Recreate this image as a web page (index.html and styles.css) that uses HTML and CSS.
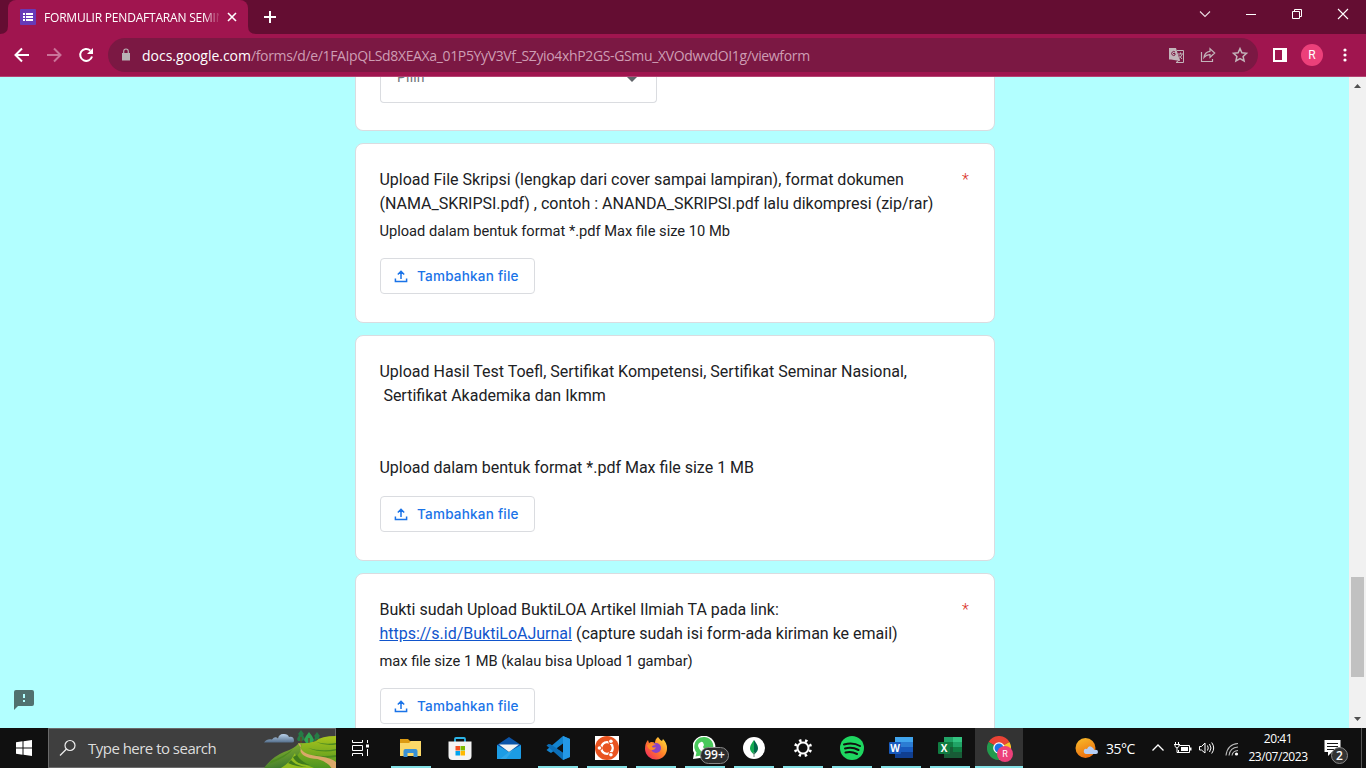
FILE: index.html
```html
<!DOCTYPE html>
<html lang="id">
<head>
<meta charset="utf-8">
<title>FORMULIR PENDAFTARAN SEMINAR</title>
<link rel="stylesheet" href="styles.css">
</head>
<body>
<svg width="0" height="0" class="defs">
  <symbol id="upload" viewBox="0 0 18 18"><path d="M3.400 11.500v3.100h11.200v-3.100M9 12V4.600M5.800 7.500 9 4.300l3.200 3.200" fill="none" stroke="#1a73e8" stroke-width="1.500"/></symbol>
</svg>
<div class="screen">
  <header class="tabstrip">
    <svg class="tab-curve" width="8" height="34"><path d="M0 34Q8 34 8 26V34Z" fill="#a0154f"/></svg>
    <div class="tab">
      <svg width="16" height="16"><rect width="16" height="16" rx="1" fill="#673ab7"/><path d="M3 4h2v2H3zM3 7h2v2H3zM3 10h2v2H3zM6 4h7v2H6zM6 7h7v2H6zM6 10h7v2H6z" fill="#fff"/></svg>
      <span class="tab-title">FORMULIR PENDAFTARAN SEMIN</span>
      <svg class="tab-close" width="10" height="10"><path d="M1 1l8 8M9 1L1 9" stroke="#fff" stroke-width="1.600"/></svg>
    </div>
    <svg class="tab-curve" width="8" height="34"><path d="M8 34Q0 34 0 26V34Z" fill="#a0154f"/></svg>
    <svg class="newtab" width="14" height="14"><path d="M7 1v12M1 7h12" stroke="#fff" stroke-width="2"/></svg>
    <div class="window-controls">
      <svg width="46" height="28"><path d="M18 11.500l5 5 5-5" fill="none" stroke="#eadce2" stroke-width="1.100"/></svg>
      <svg width="46" height="28"><path d="M18 14.500h10" stroke="#fff"/></svg>
      <svg width="46" height="28"><path d="M18.500 11.500h7v7h-7zM20.500 11v-1.500h7v7H26" fill="none" stroke="#fff"/></svg>
      <svg width="46" height="28"><path d="M18 9l10 10M28 9L18 19" stroke="#fff" stroke-width="1.100"/></svg>
    </div>
  </header>
  <nav class="toolbar">
    <svg width="32" height="32"><path d="M23 16H10M16 9.500L9.500 16l6.500 6.500" fill="none" stroke="#fff" stroke-width="2"/></svg>
    <svg width="32" height="32"><path d="M9 16h13M16 9.500l6.500 6.500-6.500 6.500" fill="none" stroke="#ca7399" stroke-width="2"/></svg>
    <svg width="32" height="32"><path d="M20.300 11.500A6 6 0 1 0 22 17.500" fill="none" stroke="#fff" stroke-width="2"/><path d="M23 9v6h-6z" fill="#fff"/></svg>
    <div class="omnibox">
      <svg width="10" height="14"><path d="M1 5h8v7.500H1z" fill="#b9b2b5"/><path d="M2.700 5V3.300a2.300 2.300 0 0 1 4.600 0V5" fill="none" stroke="#b9b2b5" stroke-width="1.200"/></svg>
      <span class="url"><b>docs.google.com</b><span>/forms/d/e/1FAIpQLSd8XEAXa_01P5YyV3Vf_SZyio4xhP2GS-GSmu_XVOdwvdOI1g/viewform</span></span>
      <svg class="omni-first" width="32" height="32"><path d="M9 9h7l4 13-9-1.500H9z" fill="#c3b4ba"/><path d="M17 11.500h6.500v12H16l4-3" fill="none" stroke="#c3b4ba"/><path d="M15 13a2 2 0 1 0 0 3v-1.500h-2" fill="none" stroke="#7b1843"/><path d="M18 15h5M20.500 13.500V15M22 15.500q-1 3-4 4.500M19 16.500l3 3.500" fill="none" stroke="#c3b4ba"/></svg>
      <svg width="32" height="32"><path d="M9.500 13v9.500h11V20M18 9.700l4.700 4.300-4.700 4.300v-2.700q-3.600-.2-6 2.900.6-5.600 6-6.200z" fill="none" stroke="#c3b4ba" stroke-width="1.200"/></svg>
      <svg width="32" height="32"><path d="M16 9.600l1.900 4.200 4.600.5-3.400 3.100 1 4.600-4.100-2.400-4.100 2.400 1-4.600-3.400-3.100 4.600-.5z" fill="none" stroke="#c3b4ba" stroke-width="1.500"/></svg>
    </div>
    <svg class="panel-icon" width="14" height="14"><path d="M1 1h12v12H1z" fill="none" stroke="#fff" stroke-width="2"/><path d="M9 1h4v12H9z" fill="#fff"/></svg>
    <div class="avatar">R</div>
    <svg class="dots" width="4" height="16"><circle cx="2" cy="3" r="1.600" fill="#fff"/><circle cx="2" cy="8" r="1.600" fill="#fff"/><circle cx="2" cy="13" r="1.600" fill="#fff"/></svg>
  </nav>

  <main class="viewport">
    <div class="form">
      <section class="card card-select">
        <div class="select"><span>Pilih</span><svg width="10" height="5"><path d="M0 0h10L5 5z" fill="#5f6368"/></svg></div>
      </section>
      <section class="card">
        <div class="question"><div class="title">Upload File Skripsi (lengkap dari cover sampai lampiran), format dokumen<br>(NAMA_SKRIPSI.pdf) , contoh : ANANDA_SKRIPSI.pdf lalu dikompresi (zip/rar)</div><span class="required">*</span></div>
        <div class="hint">Upload dalam bentuk format *.pdf Max file size 10 Mb</div>
        <button class="upload"><svg width="18" height="18"><use href="#upload"/></svg><span>Tambahkan file</span></button>
      </section>
      <section class="card">
        <div class="title">Upload Hasil Test Toefl, Sertifikat Kompetensi, Sertifikat Seminar Nasional,<br>&nbsp;Sertifikat Akademika dan Ikmm<br><br><br>Upload dalam bentuk format *.pdf Max file size 1 MB</div>
        <button class="upload"><svg width="18" height="18"><use href="#upload"/></svg><span>Tambahkan file</span></button>
      </section>
      <section class="card">
        <div class="question"><div class="title">Bukti sudah Upload BuktiLOA Artikel Ilmiah TA pada link:<br><a href="#">https://s.id/BuktiLoAJurnal</a> (capture sudah isi form-ada kiriman ke email)</div><span class="required">*</span></div>
        <div class="hint">max file size 1 MB (kalau bisa Upload 1 gambar)</div>
        <button class="upload"><svg width="18" height="18"><use href="#upload"/></svg><span>Tambahkan file</span></button>
      </section>
    </div>
    <svg class="report" width="20" height="20"><path d="M2 0h16a2 2 0 0 1 2 2v12a2 2 0 0 1-2 2H4l-4 4V2a2 2 0 0 1 2-2z" fill="#50716f"/><path d="M9 4h2v4H9zM9 10h2v2H9z" fill="#b2ffff"/></svg>
    <div class="scrollbar">
      <svg width="17" height="17"><path d="M5 11h7L8.500 7z" fill="#505050"/></svg>
      <div class="thumb"></div>
      <svg width="17" height="17"><path d="M5 6h7l-3.500 4z" fill="#505050"/></svg>
    </div>
  </main>

  <footer class="taskbar">
    <svg width="48" height="40"><path d="M16 14.300l6.500-1v6.200H16zM23.500 13.200L32 12v7.500h-8.500zM16 20.500h6.500v6.200l-6.500-1zM23.500 20.500H32V28l-8.500-1.200z" fill="#fff"/></svg>
    <div class="search">
      <svg width="18" height="18"><circle cx="11" cy="6.500" r="5" fill="none" stroke="#eee" stroke-width="1.200"/><path d="M7.500 10L1 16.500" stroke="#eee" stroke-width="1.200"/></svg>
      <span>Type here to search</span>
      <svg class="scene" width="72" height="40">
        <defs>
          <linearGradient id="cloud" x2="0" y2="1"><stop stop-color="#b9d0e8"/><stop offset="1" stop-color="#56718e"/></linearGradient>
          <linearGradient id="hill" x2="0" y2="1"><stop stop-color="#a9c51d"/><stop offset="1" stop-color="#4d9420"/></linearGradient>
          <linearGradient id="slope" x2=".5" y2="1"><stop stop-color="#9bc22d"/><stop offset="1" stop-color="#38752e"/></linearGradient>
        </defs>
        <path d="M0 14.500q3-4 8-3 3-4 6-1 1-5 6-4.500 4 0 5 3 5-1 5 4 0 1.500-2 1.500z" fill="url(#cloud)"/>
        <path d="M37 2l3 4-1 1 2 4-3 2h-4l-1-2 2-4-1-1z" fill="#267b45"/><path d="M45 4l3 4 2 4-2 3h-6l-2-3 2-4z" fill="#2fa653"/><path d="M53 4l3 4-1 1 1 4h-6l1-4-1-1z" fill="#267b45"/>
        <path d="M37 9v7M45 10v6M53 11v5" stroke="#6a4226" stroke-width="1.300"/>
        <path d="M0 40Q8 29 20 24q10-3 15-9h15v25z" fill="url(#slope)"/>
        <path d="M38 16q8-1 14-3 5-5 20-5v32H25q7-11 11-16z" fill="url(#hill)"/>
        <path d="M52 14q10 3 20 1v1.500q-10 2-20-2.500zM44 20q14 4 28 1v1.500q-15 3-28-2.500zM49 27q11 2 23 0v2q-12 2-23-2zM7 33q12-4 22-12-7 9-24 15z" fill="#4d8b20"/>
        <path d="M17 40q10-6 14-15 1 9 19 15z" fill="#92bd20"/>
        <path d="M29 29q3 8 17 8-9-3-13-10zM24 35q8 4 20 4-12-1-17-7z" fill="#3f7b1c"/>
        <path d="M34 15q4 1 2.500 4.500 1 3.500 6 6 5 2 14 3 12 2 16 6v5.500h-5q-5-7-14-9-15-1-17-8 1-3-2.500-8z" fill="#d9a869"/>
      </svg>
    </div>
    <svg width="48" height="40"><path d="M16.500 12v2.500h10V12M16.500 28v-2.500h10V28M16.500 17.500h10v5h-10zM31.500 12v3M31.500 21v7" fill="none" stroke="#fff"/><path d="M30 16.500h3v3h-3z" fill="#fff"/></svg>
    <div class="apps">
      <div class="app open"><svg width="24" height="24"><path d="M1 3h8l2 2h10v5H1z" fill="#dc9b12"/><path d="M1 7h9l2-2h10v15H1z" fill="#fbd868"/><path d="M4.500 21v-6q0-2 2-2h10q2 0 2 2v6h-4v-4h-6v4z" fill="#3991d5"/></svg></div>
      <div class="app"><svg width="24" height="24"><path d="M7 6V3q0-1 1-1h8q1 0 1 1v3" fill="none" stroke="#2cb5e8" stroke-width="1.800"/><path d="M.5 5.500h23V20q0 4-4 4h-15q-4 0-4-4z" fill="#f4f4f4"/><path d="M7.500 10H12v4.500H7.500z" fill="#f25022"/><path d="M12.500 10H17v4.500h-4.500z" fill="#7fba00"/><path d="M7.500 15H12v4.500H7.500z" fill="#00a4ef"/><path d="M12.500 15H17v4.500h-4.500z" fill="#ffb900"/></svg></div>
      <div class="app"><svg width="24" height="24"><path d="M0 9L12 1l12 8v6H0z" fill="#0b54a8"/><path d="M0 9v14h23q1 0 1-1V9L12 16z" fill="#1c9ce5"/><path d="M2 8.500h20L12 16z" fill="#f3f3f3"/><path d="M12 16l5-3.500L9 23H3z" fill="#4fb8ef" opacity=".4"/></svg></div>
      <div class="app open"><svg width="24" height="24"><path d="M17 0l7 3-19 14-2.500-1.500L.5 14z" fill="#1384cf"/><path d="M.5 9.500L2.500 8l2 .3L24 21l-7 3z" fill="#0c6fb8"/><path d="M17 0l7 3v18l-7 3z" fill="#2498e6"/><path d="M17 7.500v9L11 12z" fill="#101010"/></svg></div>
      <div class="app open"><svg width="24" height="24"><path d="M0 0h24v24H0z" fill="#fff"/><circle cx="12" cy="12" r="12" fill="#e95420"/><circle cx="12" cy="12" r="5.700" fill="none" stroke="#fff" stroke-width="2.400"/><path d="M12 12H4M12 12l4.200-7.300M12 12l4.200 7.300" stroke="#e95420" stroke-width="1.200"/><circle cx="12" cy="12" r="4.400" fill="#e95420"/><circle cx="4.500" cy="12" r="2.500" fill="#e95420"/><circle cx="15.800" cy="5.400" r="2.500" fill="#e95420"/><circle cx="15.800" cy="18.600" r="2.500" fill="#e95420"/><circle cx="4.400" cy="12" r="1.800" fill="#fff"/><circle cx="15.900" cy="5.200" r="1.800" fill="#fff"/><circle cx="15.900" cy="18.800" r="1.800" fill="#fff"/></svg></div>
      <div class="app open"><svg width="24" height="24"><defs><linearGradient id="fox" x1="1" x2="0" y2="1"><stop stop-color="#ffec3c"/><stop offset=".5" stop-color="#ff7d29"/><stop offset="1" stop-color="#f01b67"/></linearGradient></defs><path d="M14 1q2 3 4 4l1-2q4 4 4 9a11 11 0 0 1-22 1q0-6 3-9l1 3 2-1q3 0 4 1Q11 3 14 1z" fill="url(#fox)"/><circle cx="12" cy="12" r="5" fill="#8b43c6"/><path d="M3 9q5-3 9 0-4 0-4 2 2 1 4 0-1 3-4 3-4 0-5-5z" fill="#ff8c26"/></svg></div>
      <div class="app open"><svg width="24" height="24"><path d="M0 23l1-6A11.500 11.500 0 1 1 7 22z" fill="#fff"/><path d="M2.500 20.500l1-4A9.500 9.500 0 1 1 8 19.500z" fill="#49c95b"/><path d="M8 6q2-1 3 3l-1 2q1 3 4 4l2-1q2 1 2 2-2 3-5 2-6-2-8-8 0-3 3-4z" fill="#fff"/></svg><span class="badge">99+</span></div>
      <div class="app open"><svg width="24" height="24"><circle cx="12" cy="12" r="11" fill="#fff"/><path d="M12 4q-4 5-4 8.500 0 3 4 6z" fill="#13aa52"/><path d="M12 4q4 5 4 8.500 0 3-4 6z" fill="#00684a"/><path d="M12 16v5" stroke="#7a8a80"/></svg></div>
      <div class="app open"><svg width="24" height="24"><circle cx="12" cy="12" r="5.500" fill="none" stroke="#fff" stroke-width="2"/><circle cx="12" cy="12" r="7.600" fill="none" stroke="#fff" stroke-width="3" stroke-dasharray="2.400 3.569" stroke-dashoffset="-1.800"/></svg></div>
      <div class="app open"><svg width="24" height="24"><circle cx="12" cy="12" r="12" fill="#1ed760"/><path d="M4 8.500q9-2.500 16 1.500M5 12.500q7-2 13.500 1.500M5.500 16.500q6-1.500 11.500 1.500" fill="none" stroke="#101010" stroke-width="2" stroke-linecap="round"/></svg></div>
      <div class="app open"><svg width="24" height="24"><path d="M6 1h18v7H6z" fill="#41a5ee"/><path d="M6 6h18v6H6z" fill="#2b7cd3"/><path d="M6 11h18v6H6z" fill="#185abd"/><path d="M6 16h18v6H6z" fill="#103f91"/><rect y="6" width="12" height="12" rx="1" fill="#185abd"/><text x="6" y="15.500" text-anchor="middle" class="office">W</text></svg></div>
      <div class="app open"><svg width="24" height="24"><path d="M6 1h9v7H6z" fill="#21a366"/><path d="M15 1h9v7h-9z" fill="#33c481"/><path d="M6 6h9v6H6z" fill="#107c41"/><path d="M15 6h9v6h-9z" fill="#21a366"/><path d="M6 11h9v6H6z" fill="#185c37"/><path d="M15 11h9v6h-9z" fill="#107c41"/><path d="M6 16h18v6H6z" fill="#185c37"/><rect y="6" width="12" height="12" rx="1" fill="#107c41"/><text x="6" y="15.500" text-anchor="middle" class="office">X</text></svg></div>
      <div class="app open active"><svg width="24" height="24"><path d="M12 12L1.600 6A12 12 0 0 1 22.400 6z" fill="#ea4335"/><path d="M12 12L22.400 6A12 12 0 0 1 12 24z" fill="#fbc02d"/><path d="M12 12v12A12 12 0 0 1 1.600 6z" fill="#229a4d"/><path d="M2 6h20.500H12z" fill="#ea4335"/><circle cx="12" cy="12" r="5.800" fill="#fff"/><circle cx="12" cy="12" r="4.500" fill="#1a73e8"/></svg><span class="chrome-badge">R</span></div>
    </div>
    <div class="tray">
      <svg class="weather" width="24" height="24"><defs><linearGradient id="sun" x2=".4" y2="1"><stop stop-color="#f8be2b"/><stop offset="1" stop-color="#ed7110"/></linearGradient></defs><circle cx="10.500" cy="12" r="10" fill="url(#sun)"/><path d="M11 18q-3-1-2-4 1-2 3-1 2-5 6-1 1 1 1 2 4-1 4 2 0 2-2 2z" fill="#b6cef5"/></svg>
      <span class="temp">35°C</span>
      <svg class="chev" width="14" height="10"><path d="M1.500 7.500L7 2l5.500 5.500" fill="none" stroke="#fff" stroke-width="1.300"/></svg>
      <svg class="battery" width="18" height="14"><path d="M5.500 4.500h10v7h-11V9" fill="none" stroke="#fff"/><path d="M7 6h7v4H7zM16 6.500h1.500v3H16z" fill="#fff"/><path d="M1.500 1v2M4.500 1v2M0 3.500h6M1 4v1.500l2 1.500 2-1.500V4M3 7v4.500h2" fill="none" stroke="#fff"/></svg>
      <svg class="sound" width="18" height="14"><path d="M1.500 5.500h2L7 2v10L3.500 9h-2zM9.500 4.500q1.500 2.500 0 5M11.500 3q3 4 0 8M13.700 1.500q4 5.500 0 11" fill="none" stroke="#fff"/></svg>
      <svg class="wifi" width="15" height="15"><path d="M1 13.500Q2.500 2 13 1.500M4 13.500Q5 5.500 13 5M7 13.500Q7.500 9 13 8.500" fill="none" stroke="#bbb" stroke-width="1.100"/><circle cx="11.500" cy="12" r="1.600" fill="#fff"/></svg>
      <div class="clock"><div class="time">20:41</div><div class="date">23/07/2023</div></div>
      <div class="notices"><svg width="17" height="16"><path d="M.5 0h16v12H8l-4 4v-4H.5z" fill="#fff"/><path d="M3 3.500h11M3 6.500h11M3 9.500h7" stroke="#151515"/></svg><span>2</span></div>
    </div>
  </footer>
</div>
</body>
</html>
```
FILE: styles.css
```css
* { box-sizing: border-box; }
body { margin: 0; overflow: hidden; font-family: Roboto, sans-serif; }
svg { display: block; flex: none; }
.defs { position: absolute; }
.screen { width: 1366px; height: 768px; display: flex; flex-direction: column; white-space: nowrap; }

.tabstrip { height: 34px; flex: none; display: flex; background: #640d32; }
.tab { width: 240px; height: 34px; padding: 0 11px 0 12px; display: flex; align-items: center; background: #a0154f; border-radius: 8px 8px 0 0; }
.tab-title { width: 175px; margin-left: 8px; overflow: hidden; font: 12px "Open Sans", sans-serif; letter-spacing: -.2px; color: #fff; -webkit-mask-image: linear-gradient(90deg, #000 160px, transparent 177px); mask-image: linear-gradient(90deg, #000 160px, transparent 177px); }
.tab-close { margin-left: 8px; }
.newtab { margin: 10px 0 0 7px; }
.window-controls { display: flex; margin-left: auto; }

.toolbar { height: 43px; flex: none; display: flex; align-items: center; padding-left: 6px; background: #a0154f; border-bottom: 1px solid #b44372; }
.omnibox { width: 1150px; height: 34px; margin-left: 6px; padding: 0 2px 0 13px; display: flex; align-items: center; background: #7b1843; border-radius: 17px; }
.url { margin-left: 11px; font: 14px "Open Sans", sans-serif; color: #ce9db3; }
.url b { font-weight: 400; color: #fff; letter-spacing: -.02px; }
.url span { letter-spacing: -.355px; }
.omni-first { margin-left: auto; }
.panel-icon { margin-left: 15px; }
.avatar { width: 22px; height: 22px; margin-left: 14px; border-radius: 50%; background: #ec407a; color: #fff; font-size: 12px; line-height: 22px; text-align: center; }
.dots { margin-left: 20px; }

.viewport { position: relative; flex: 1; min-height: 0; display: flex; overflow: hidden; background: #b2ffff; }
.form { width: 640px; margin-left: 355px; display: flex; flex-direction: column; gap: 12px; }
.card { flex: none; padding: 24px 24px 28px 24px; background: #fff; border: 1px solid #dadce0; border-radius: 8px; color: #202124; }
.card-select { height: 54px; padding: 0 24px; border-top: 0; border-radius: 0 0 8px 8px; }
.select { width: 277px; height: 26px; overflow: hidden; padding: 0 19px 0 16px; display: flex; justify-content: space-between; border: 1px solid #dadce0; border-top: 0; border-radius: 0 0 4px 4px; font-size: 14px; color: #70757a; }
.select span { margin-top: -9px; line-height: 18px; letter-spacing: .2px; }
.question { display: flex; justify-content: space-between; }
.title { margin-left: -.6px; font-size: 16px; line-height: 24px; }
.title a { color: #1155cc; }
.required { width: 8px; color: #d93025; font-size: 16px; line-height: 24px; font-weight: 300; }
.hint { margin: 5px 0 0 -.6px; font-size: 14.667px; line-height: 20px; }
.upload { width: 155px; height: 36px; margin: 17px 0 0; padding: 0 0 0 11px; display: flex; align-items: center; gap: 7px; background: #fff; border: 1px solid #dadce0; border-radius: 4px; color: #1a73e8; font: 500 13.500px Inter, sans-serif; letter-spacing: .22px; }
.title + .upload { margin-top: 16px; }
.report { position: absolute; left: 14px; top: 613px; }
.scrollbar { width: 17px; margin-left: auto; display: flex; flex-direction: column; background: #f1f1f1; }
.thumb { width: 13px; height: 100px; margin: 483px 0 34px 2px; background: #c1c1c1; }

.taskbar { height: 40px; flex: none; display: flex; background: #101010; color: #fff; font-family: "Open Sans", sans-serif; }
.search { width: 288px; display: flex; align-items: center; padding-left: 10px; background: #3f3f3f; border: 1px solid #6a6a6a; font-size: 15px; color: #ddd; }
.search span { margin-left: 11px; letter-spacing: -.52px; }
.scene { margin: 0 -1px 0 auto; }
.apps { display: flex; gap: 1px; margin-left: 3px; }
.app { position: relative; width: 48px; height: 40px; display: flex; align-items: center; justify-content: center; }
.open::after { content: ""; position: absolute; left: 4px; right: 4px; bottom: 0; height: 2px; background: #83e0e5; }
.active { background: #333; }
.active::after { left: 0; right: 0; }
.office { font: bold 10px "Open Sans", sans-serif; fill: #fff; }
.badge { position: absolute; left: 19px; top: 19px; width: 29px; height: 17px; border: 1px solid #888; border-radius: 9px; background: #2c2c2c; font-size: 12px; font-weight: 600; line-height: 14px; text-align: center; }
.chrome-badge { position: absolute; left: 22px; top: 18px; width: 16px; height: 16px; border-radius: 50%; background: #ec407a; font: 9px/16px Roboto, sans-serif; text-align: center; }
.tray { flex: 1; display: flex; align-items: center; padding-left: 52px; }
.temp { width: 31px; margin-left: 7px; font-size: 14px; letter-spacing: -.5px; }
.chev { margin-left: 14px; }
.battery { margin-left: 9px; }
.sound { margin-left: 6px; }
.wifi { margin-left: 9px; margin-top: 2px; }
.clock { width: 60px; margin-left: 8px; font-size: 12px; line-height: 18px; display: flex; flex-direction: column; align-items: center; letter-spacing: -.45px; }
.notices { position: relative; margin-left: 16px; }
.notices span { position: absolute; left: 7px; top: 7px; width: 17px; height: 17px; border: 1px solid #888; border-radius: 50%; background: #333; font-size: 12px; font-weight: 600; line-height: 15px; text-align: center; }
.taskbar::after { content: ""; width: 1px; margin-right: 4px; background: #555; }
```
